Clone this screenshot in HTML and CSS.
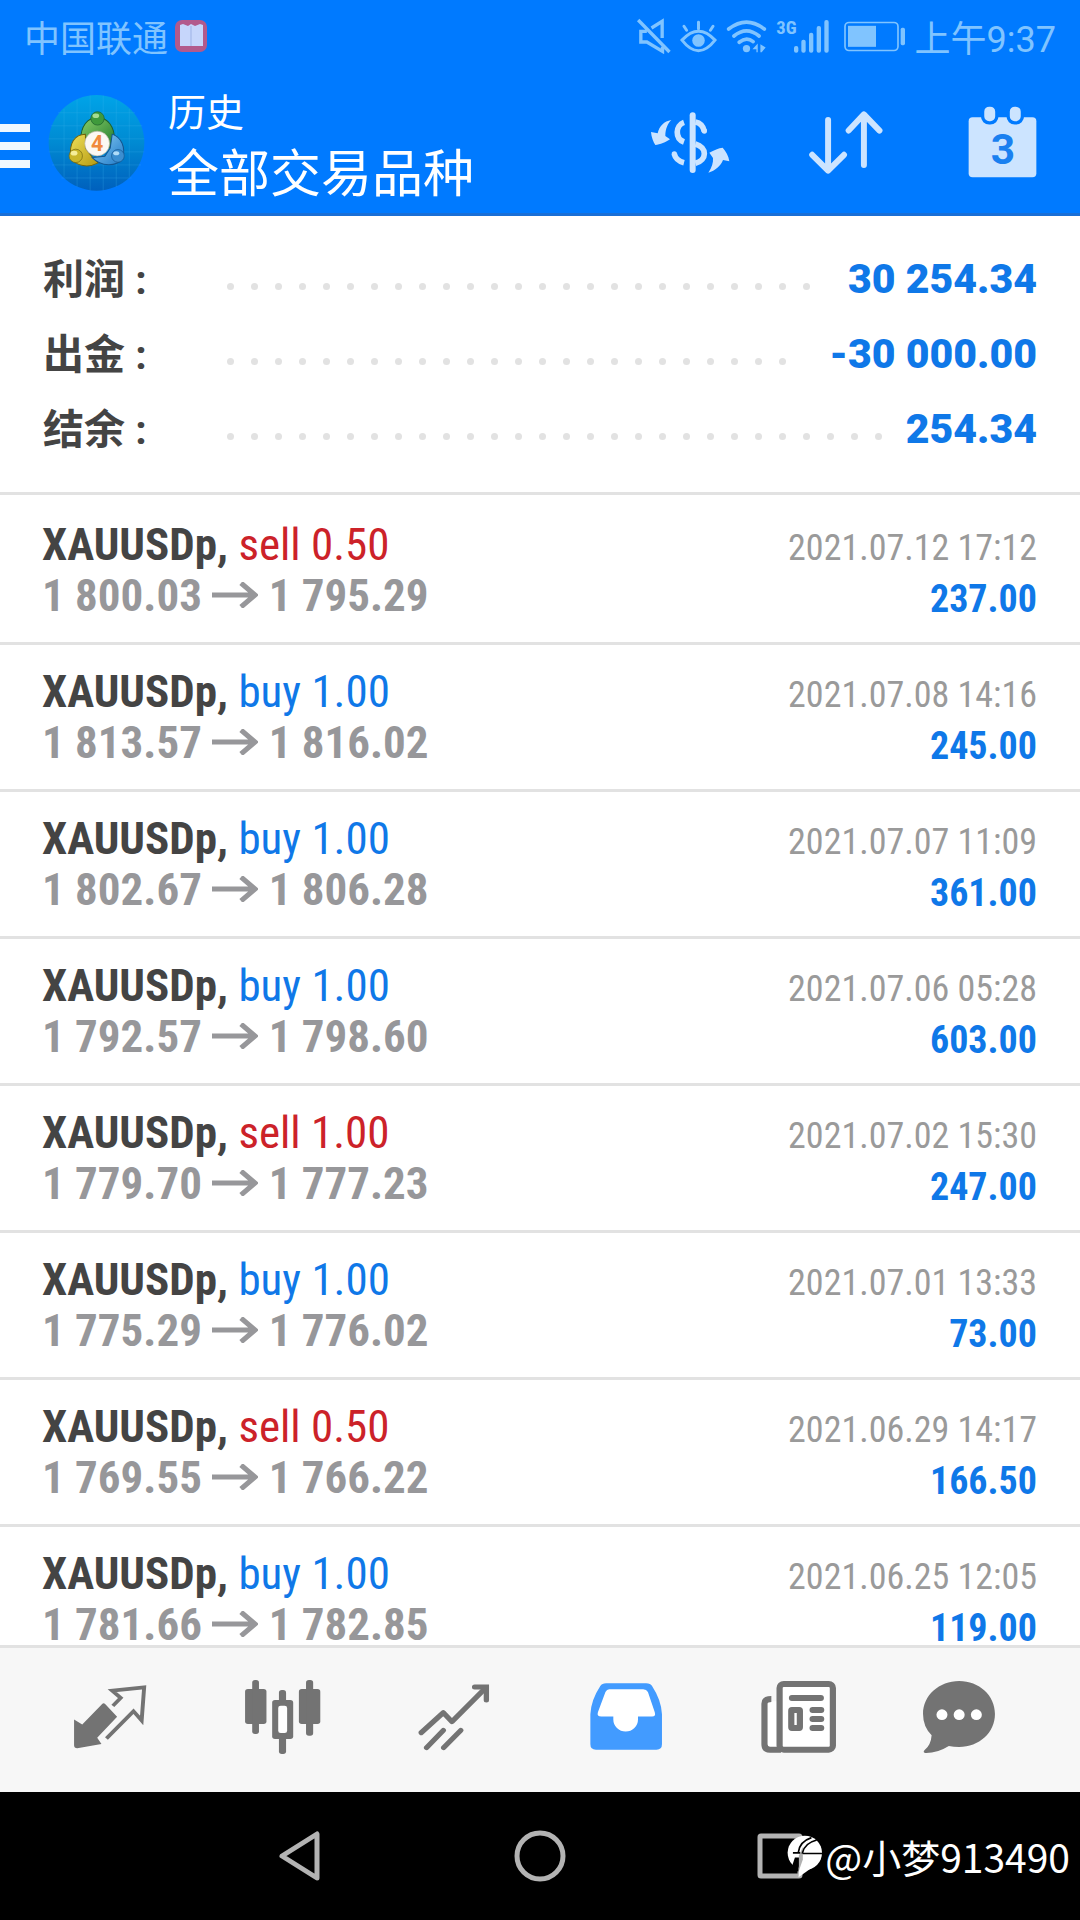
FILE: index.html
```html
<!DOCTYPE html>
<html lang="zh-CN">
<head>
<meta charset="utf-8">
<meta name="viewport" content="width=device-width, initial-scale=1">
<title>历史</title>
<link rel="stylesheet" href="styles.css">
</head>
<body>
<div class="app">
  <header class="header">
    <div class="status">
      <span>中国联通</span>
      <svg class="book" width="34" height="34" viewBox="0 0 34 34" aria-hidden="true">
        <rect x="1" y="1" width="32" height="32" rx="7" fill="#b25a8c"/>
        <path d="M6 6l3-1 5 2 3-2 4 2 5-2 3 1v21H6z" fill="#c6d6fb"/>
        <path d="M17 7v20" stroke="#9db2e6" stroke-width="1"/>
      </svg>
      <div class="status-right">
        <svg width="35" height="36" viewBox="16 26 104 108" fill="none" stroke="currentColor" stroke-width="10" aria-hidden="true">
          <path d="M48 66H30V98H48L95 126V112M62 56L94 36V86M22 32L116 128"/>
        </svg>
        <svg width="37" height="33" viewBox="148 30 112 98" fill="none" stroke="currentColor" stroke-width="9" stroke-linecap="round" aria-hidden="true">
          <path d="M154 90Q204 36 254 90Q204 154 154 90ZM204 36V56M160 48L168 60M248 48L240 60"/>
          <circle cx="204" cy="91" r="19" fill="currentColor" stroke="none"/>
        </svg>
        <svg width="41" height="34" viewBox="284 26 124 102" fill="none" stroke="currentColor" stroke-width="11" stroke-linecap="round" aria-hidden="true">
          <path d="M292 56Q346 14 400 56M308 77Q346 46 384 77M324 96Q346 78 366 94"/>
          <g fill="currentColor" stroke="none"><circle cx="346" cy="115" r="11"/><path d="M364 117L380 100V126H376V117ZM388 102L404 112L392 126H388Z"/></g>
        </svg>
        <svg width="59" height="36" viewBox="436 22 177 108" fill="currentColor" aria-hidden="true">
          <text class="network" x="437" y="70">3G</text>
          <rect x="490" y="106" width="13" height="20" rx="6"/><rect x="512" y="87" width="13" height="39" rx="6"/><rect x="535" y="66" width="13" height="60" rx="6"/><rect x="558" y="46" width="13" height="80" rx="6"/><rect x="581" y="28" width="13" height="98" rx="6"/>
        </svg>
        <svg width="62" height="31" viewBox="730 64 186 92" fill="currentColor" aria-hidden="true">
          <rect x="733" y="68" width="159" height="84" rx="12" fill="none" stroke="currentColor" stroke-width="5"/>
          <rect x="742" y="78" width="84" height="63"/><rect x="900" y="84" width="13" height="52" rx="5"/>
        </svg>
        <time>上午9:37</time>
      </div>
    </div>
    <div class="appbar">
      <button class="menu" aria-label="菜单"><i></i><i></i><i></i></button>
      <svg class="logo" width="97" height="97" viewBox="20 14 290 290" aria-hidden="true">
        <defs>
          <linearGradient id="disc" x1="0" y1="0" x2="0" y2="1"><stop offset="0" stop-color="#00a4e8"/><stop offset=".5" stop-color="#008ad2"/><stop offset="1" stop-color="#0060bd"/></linearGradient>
          <linearGradient id="green" x1="0" y1="0" x2="1" y2="1"><stop offset="0" stop-color="#8bcf6a"/><stop offset="1" stop-color="#1f7a2c"/></linearGradient>
          <linearGradient id="gold" x1="0" y1="0" x2="1" y2="1"><stop offset="0" stop-color="#f0e05a"/><stop offset="1" stop-color="#b59a12"/></linearGradient>
          <linearGradient id="sky" x1="0" y1="0" x2="1" y2="1"><stop offset="0" stop-color="#8fd0f5"/><stop offset="1" stop-color="#1c78c8"/></linearGradient>
        </defs>
        <circle cx="165" cy="160" r="143" fill="url(#disc)"/>
        <path d="M68 58V262M107 30V292M146 18V302M185 18V302M224 30V292M263 58V262M50 70H280M28 109H302M22 148H308M22 187H308M32 226H298M60 265H270" stroke="#3fb4ec" stroke-opacity=".35" stroke-width="2"/>
        <path d="M118 150C118 110 138 84 168 84C198 84 220 112 218 150L202 176L188 140H148L132 156Z" fill="url(#green)" stroke="#1d5f2c" stroke-width="3"/>
        <path d="M132 134C100 134 82 160 88 206C106 230 140 236 170 220L150 200L132 176Z" fill="url(#gold)" stroke="#71640f" stroke-width="3"/>
        <path d="M212 134C240 144 252 172 244 208C222 232 180 232 152 204L190 200L206 176Z" fill="url(#sky)" stroke="#14558f" stroke-width="3"/>
        <circle cx="168" cy="87" r="20" fill="#3f9a3c" stroke="#1d5f2c" stroke-width="2"/><ellipse cx="163" cy="79" rx="10" ry="7" fill="#a5dc92"/>
        <circle cx="103" cy="199" r="20" fill="#c9b62a" stroke="#71640f" stroke-width="2"/><ellipse cx="98" cy="191" rx="10" ry="7" fill="#f5ee9a"/>
        <circle cx="229" cy="199" r="19" fill="#3b8ed0" stroke="#14558f" stroke-width="2"/><ellipse cx="224" cy="191" rx="9" ry="6" fill="#b0dcf8"/>
        <circle cx="167" cy="162" r="37" fill="#fbf8f2" stroke="#b9b6a4" stroke-width="2"/>
        <text class="logo-digit" x="167" y="184" text-anchor="middle">4</text>
      </svg>
      <div class="titles">
        <p class="subtitle">历史</p>
        <h1 class="title">全部交易品种</h1>
      </div>
      <button class="action" aria-label="货币">
        <svg width="80" height="62" viewBox="30 34 240 186" fill="none" stroke="currentColor" stroke-width="17" aria-hidden="true">
          <path d="M132 65C106 74 104 114 132 124M166 130C202 140 202 178 166 188"/>
          <path d="M132 186C116 182 106 174 103 160M166 64C182 67 190 78 193 92" />
          <circle cx="103" cy="160" r="8" fill="currentColor" stroke="none"/><circle cx="193" cy="91" r="8" fill="currentColor" stroke="none"/>
          <path d="M158 44V208" stroke-width="18" stroke-linecap="round"/>
          <path d="M94 58C72 62 58 76 53 98L33 94C34 110 40 124 46 133C60 132 78 124 90 116L76 106C76 84 84 68 94 58ZM205 216C216 200 220 186 219 172L208 156C222 148 236 142 248 141C258 152 266 166 268 182L249 178C242 196 226 210 205 216Z" fill="currentColor" stroke="none"/>
        </svg>
      </button>
      <button class="action" aria-label="排序">
        <svg width="76" height="65" viewBox="624 332 228 196" fill="none" stroke="currentColor" stroke-width="18" stroke-linecap="round" stroke-linejoin="round" aria-hidden="true">
          <path d="M684 362V514M636 467L684 515L732 467M792 498V346M746 394L792 345L839 394"/>
        </svg>
      </button>
      <button class="action" aria-label="日期">
        <svg width="71" height="73" viewBox="1100 320 212 220" aria-hidden="true">
          <rect x="1104" y="354" width="204" height="181" rx="12" fill="currentColor"/>
          <g fill="currentColor" stroke="#007aff" stroke-width="10"><rect x="1146" y="317" width="43" height="54" rx="20"/><rect x="1223" y="317" width="43" height="54" rx="20"/></g>
          <text class="calendar-day" x="1207" y="496" text-anchor="middle">3</text>
        </svg>
      </button>
    </div>
  </header>

  <main class="content">
    <dl class="summary">
      <div class="total"><dt>利润 :</dt><dd><span class="leader"><i></i><i></i><i></i><i></i><i></i><i></i><i></i><i></i><i></i><i></i><i></i><i></i><i></i><i></i><i></i><i></i><i></i><i></i><i></i><i></i><i></i><i></i><i></i><i></i><i></i><i></i><i></i><i></i></span><b>30 254.34</b></dd></div>
      <div class="total"><dt>出金 :</dt><dd><span class="leader"><i></i><i></i><i></i><i></i><i></i><i></i><i></i><i></i><i></i><i></i><i></i><i></i><i></i><i></i><i></i><i></i><i></i><i></i><i></i><i></i><i></i><i></i><i></i><i></i><i></i><i></i><i></i><i></i></span><b>-30 000.00</b></dd></div>
      <div class="total"><dt>结余 :</dt><dd><span class="leader"><i></i><i></i><i></i><i></i><i></i><i></i><i></i><i></i><i></i><i></i><i></i><i></i><i></i><i></i><i></i><i></i><i></i><i></i><i></i><i></i><i></i><i></i><i></i><i></i><i></i><i></i><i></i><i></i></span><b>254.34</b></dd></div>
    </dl>
    <ul class="deals">
      <li class="deal"><div><p class="symbol"><b>XAUUSDp,</b> <span class="sell">sell 0.50</span></p><p class="prices">1 800.03 <svg class="arrow" viewBox="0 0 46 26" role="img" aria-label="至"><path d="M0 13H43M29 1L43 13L29 25"/></svg> 1 795.29</p></div><div class="result"><time>2021.07.12 17:12</time><b>237.00</b></div></li>
      <li class="deal"><div><p class="symbol"><b>XAUUSDp,</b> <span class="buy">buy 1.00</span></p><p class="prices">1 813.57 <svg class="arrow" viewBox="0 0 46 26" role="img" aria-label="至"><path d="M0 13H43M29 1L43 13L29 25"/></svg> 1 816.02</p></div><div class="result"><time>2021.07.08 14:16</time><b>245.00</b></div></li>
      <li class="deal"><div><p class="symbol"><b>XAUUSDp,</b> <span class="buy">buy 1.00</span></p><p class="prices">1 802.67 <svg class="arrow" viewBox="0 0 46 26" role="img" aria-label="至"><path d="M0 13H43M29 1L43 13L29 25"/></svg> 1 806.28</p></div><div class="result"><time>2021.07.07 11:09</time><b>361.00</b></div></li>
      <li class="deal"><div><p class="symbol"><b>XAUUSDp,</b> <span class="buy">buy 1.00</span></p><p class="prices">1 792.57 <svg class="arrow" viewBox="0 0 46 26" role="img" aria-label="至"><path d="M0 13H43M29 1L43 13L29 25"/></svg> 1 798.60</p></div><div class="result"><time>2021.07.06 05:28</time><b>603.00</b></div></li>
      <li class="deal"><div><p class="symbol"><b>XAUUSDp,</b> <span class="sell">sell 1.00</span></p><p class="prices">1 779.70 <svg class="arrow" viewBox="0 0 46 26" role="img" aria-label="至"><path d="M0 13H43M29 1L43 13L29 25"/></svg> 1 777.23</p></div><div class="result"><time>2021.07.02 15:30</time><b>247.00</b></div></li>
      <li class="deal"><div><p class="symbol"><b>XAUUSDp,</b> <span class="buy">buy 1.00</span></p><p class="prices">1 775.29 <svg class="arrow" viewBox="0 0 46 26" role="img" aria-label="至"><path d="M0 13H43M29 1L43 13L29 25"/></svg> 1 776.02</p></div><div class="result"><time>2021.07.01 13:33</time><b>73.00</b></div></li>
      <li class="deal"><div><p class="symbol"><b>XAUUSDp,</b> <span class="sell">sell 0.50</span></p><p class="prices">1 769.55 <svg class="arrow" viewBox="0 0 46 26" role="img" aria-label="至"><path d="M0 13H43M29 1L43 13L29 25"/></svg> 1 766.22</p></div><div class="result"><time>2021.06.29 14:17</time><b>166.50</b></div></li>
      <li class="deal"><div><p class="symbol"><b>XAUUSDp,</b> <span class="buy">buy 1.00</span></p><p class="prices">1 781.66 <svg class="arrow" viewBox="0 0 46 26" role="img" aria-label="至"><path d="M0 13H43M29 1L43 13L29 25"/></svg> 1 782.85</p></div><div class="result"><time>2021.06.25 12:05</time><b>119.00</b></div></li>
    </ul>
  </main>

  <nav class="tabs" aria-label="主导航">
    <button class="tab" aria-label="行情">
      <svg width="74" height="65" viewBox="204 436 208 196" preserveAspectRatio="none" aria-hidden="true">
        <path d="M207 543L230 558L286 496Q290 492 295 497L328 535L272 598L284 617L216 630Q207 630 207 621Z" fill="currentColor"/>
        <path d="M298 600L374 518L397 546L404 446L314 456L338 478L316 502" fill="none" stroke="currentColor" stroke-width="11"/>
      </svg>
    </button>
    <button class="tab" aria-label="图表">
      <svg width="77" height="76" viewBox="680 420 216 228" preserveAspectRatio="none" fill="currentColor" aria-hidden="true">
        <rect x="683" y="450" width="60" height="105" rx="8"/><rect x="703" y="423" width="19" height="162" rx="8"/>
        <rect x="834" y="450" width="60" height="105" rx="8"/><rect x="854" y="423" width="20" height="167" rx="8"/>
        <rect x="759" y="483" width="59" height="117" rx="8"/><rect x="778" y="453" width="20" height="192" rx="8"/>
        <rect x="776" y="500" width="25" height="82" rx="7" fill="#fff"/>
      </svg>
    </button>
    <button class="tab" aria-label="交易">
      <svg width="74" height="68" viewBox="1166 428 208 204" preserveAspectRatio="none" fill="none" stroke="currentColor" stroke-width="15" stroke-linecap="round" aria-hidden="true">
        <path d="M1178 577L1240 517L1264 544L1358 444" stroke-linejoin="round"/><path d="M1328 440H1361V479"/>
        <path d="M1193 622L1240 570M1241 622L1289 570"/>
      </svg>
    </button>
    <button class="tab active" aria-label="历史">
      <svg width="74" height="69" viewBox="144 428 216 206" preserveAspectRatio="none" aria-hidden="true">
        <path d="M194 432H311Q323 432 328 440Q355 482 357 524V614Q357 630 341 630H164Q148 630 148 614V524Q150 482 177 440Q182 432 194 432Z" fill="currentColor"/>
        <path d="M203 450H302Q312 450 316 458L336 518Q340 531 328 531H287V540A36 36 0 0 1 215 540V531H180Q166 531 170 518L192 458Q196 450 203 450Z" fill="#fff"/>
      </svg>
    </button>
    <button class="tab" aria-label="新闻">
      <svg width="77" height="74" viewBox="644 420 224 222" preserveAspectRatio="none" fill="none" stroke="currentColor" stroke-width="18" stroke-linecap="round" aria-hidden="true">
        <rect x="665" y="484" width="36" height="140" fill="#fff" stroke="none"/>
        <path d="M677 477Q657 477 657 491V613Q657 629 673 629H705" stroke-linecap="butt"/>
        <rect x="701" y="432" width="155" height="197" rx="12" fill="#fff"/>
        <path d="M737 474H821M797 510H822M797 537H822M797 564H822"/>
        <rect x="735" y="510" width="25" height="54" rx="2"/>
      </svg>
    </button>
    <button class="tab" aria-label="消息">
      <svg width="96" height="74" viewBox="1106 420 279 222" preserveAspectRatio="none" aria-hidden="true">
        <path d="M1214 423C1272 423 1318 466 1318 522C1318 578 1272 621 1214 621Q1198 621 1184 618Q1150 640 1115 639Q1108 637 1113 631Q1132 616 1134 586Q1109 560 1109 522C1109 466 1156 423 1214 423Z" fill="currentColor"/>
        <g fill="#fff"><circle cx="1164" cy="524" r="16"/><circle cx="1214" cy="524" r="16"/><circle cx="1264" cy="524" r="16"/></g>
      </svg>
    </button>
  </nav>

  <footer class="system">
    <button class="key" aria-label="返回"><svg width="44" height="52" viewBox="0 0 44 52" aria-hidden="true"><path d="M39 4V48L4 26Z"/></svg></button>
    <button class="key" aria-label="主屏幕"><svg width="52" height="52" viewBox="0 0 52 52" aria-hidden="true"><circle cx="26" cy="26" r="23"/></svg></button>
    <button class="key" aria-label="最近任务"><svg width="46" height="46" viewBox="0 0 46 46" aria-hidden="true"><rect x="3" y="3" width="40" height="40" rx="1"/></svg></button>
    <p class="watermark">
      <svg width="37" height="43" viewBox="138 122 110 130" aria-hidden="true">
        <circle cx="194" cy="176" r="52" fill="#fff"/><path d="M178 210L175 250L216 220Z" fill="#fff"/>
        <path d="M152 226L164 190H180L174 232Z" fill="#000"/>
        <path d="M176 230V184L188 158V196Z" fill="#b0b0b0"/>
        <path d="M186 178C190 156 202 144 230 137M188 178H248M158 176H180M174 176C176 156 190 138 214 130" fill="none" stroke="#000" stroke-width="5"/>
      </svg>
      <span>@小梦913490</span>
    </p>
  </footer>
</div>
</body>
</html>
```
FILE: styles.css
```css
* { box-sizing: border-box; }
body, p, h1, dl, dd, ul { margin: 0; padding: 0; }
body { background: #fff; color: #444; font-family: Roboto, "Noto Sans CJK SC", sans-serif; }
button { border: 0; padding: 0; background: none; color: inherit; font: inherit; }
svg { display: block; flex: none; }

.app { display: flex; flex-direction: column; height: 100vh; }

.header { flex: none; background: #007aff; border-bottom: 3px solid #1a6fd6; color: #fff; }
.status { display: flex; align-items: center; gap: 6px; height: 72px; padding: 0 24px; color: #80c4ff; font-size: 36px; }
.status-right { display: flex; align-items: center; gap: 9px; margin-left: auto; }
.network { font: bold 56px "Roboto Condensed", sans-serif; }

.appbar { display: flex; align-items: center; height: 141px; }
.menu { display: flex; flex-direction: column; gap: 10px; width: 30px; margin-top: 6px; }
.menu i { height: 8px; background: #f0f8ff; }
.logo { margin-left: 18px; }
.logo-digit { font: bold 64px Roboto, sans-serif; fill: #f08a3c; }
.titles { flex: 1; margin-left: 23px; padding-top: 10px; white-space: nowrap; }
.subtitle { font-size: 38px; line-height: 54px; }
.title { font-size: 51px; line-height: 70px; font-weight: 400; }
.action { display: flex; justify-content: center; width: 156px; color: #cce4ff; }
.calendar-day { font: bold 128px Roboto, sans-serif; fill: #1a80f0; }

.content { flex: 1; min-height: 0; overflow: hidden; }
.summary { padding: 26px 43px 25px; border-bottom: 3px solid #e2e2e2; }
.total { display: flex; height: 75px; line-height: 75px; font-size: 41px; font-weight: 700; }
.total dt { flex: none; width: 184px; line-height: 76px; }
.total dd { flex: 1; display: flex; align-items: center; gap: 21px; color: #0f78e8; }
.leader { flex: 1; display: flex; flex-wrap: wrap; gap: 17px; height: 7px; margin-top: 14px; overflow: hidden; }
.leader i { width: 7px; height: 7px; border-radius: 50%; background: #e2e2e2; }

.deals { padding-top: 3px; list-style: none; font-family: "Roboto Condensed", "Noto Sans CJK SC", sans-serif; }
.deal { display: flex; justify-content: space-between; height: 147px; padding: 21px 43px 0 42px; border-bottom: 3px solid #e2e2e2; font-size: 45px; line-height: 51px; white-space: nowrap; }
.sell { color: #cc2229; }
.buy { color: #0f78e8; }
.prices { color: #97979a; font-weight: 700; }
.arrow { display: inline-block; width: 46px; height: 26px; vertical-align: 3px; fill: none; stroke: #97979a; stroke-width: 5; }
.result { display: flex; flex-direction: column; align-items: flex-end; padding-top: 4px; font-size: 38px; }
.result time { color: #9a9a9a; font-size: 36px; }
.result b { color: #0f78e8; }

.tabs { flex: none; display: grid; grid-template-columns: repeat(6, 1fr); height: 147px; padding: 0 24px; background: #f7f7f7; border-top: 3px solid #e2e2e2; color: #737373; }
.tab { display: flex; align-items: center; justify-content: center; padding-bottom: 7px; }
.tab.active { color: #429bff; }

.system { position: relative; flex: none; display: flex; justify-content: center; height: 128px; background: #000; }
.key { display: flex; align-items: center; justify-content: center; width: 240px; }
.key svg { fill: none; stroke: #b3b3b3; stroke-width: 5; stroke-linejoin: round; }
.watermark { position: absolute; right: 10px; top: 36px; display: flex; align-items: center; gap: 2px; color: #fff; font: 39px/56px "Noto Sans CJK SC", sans-serif; }
```
